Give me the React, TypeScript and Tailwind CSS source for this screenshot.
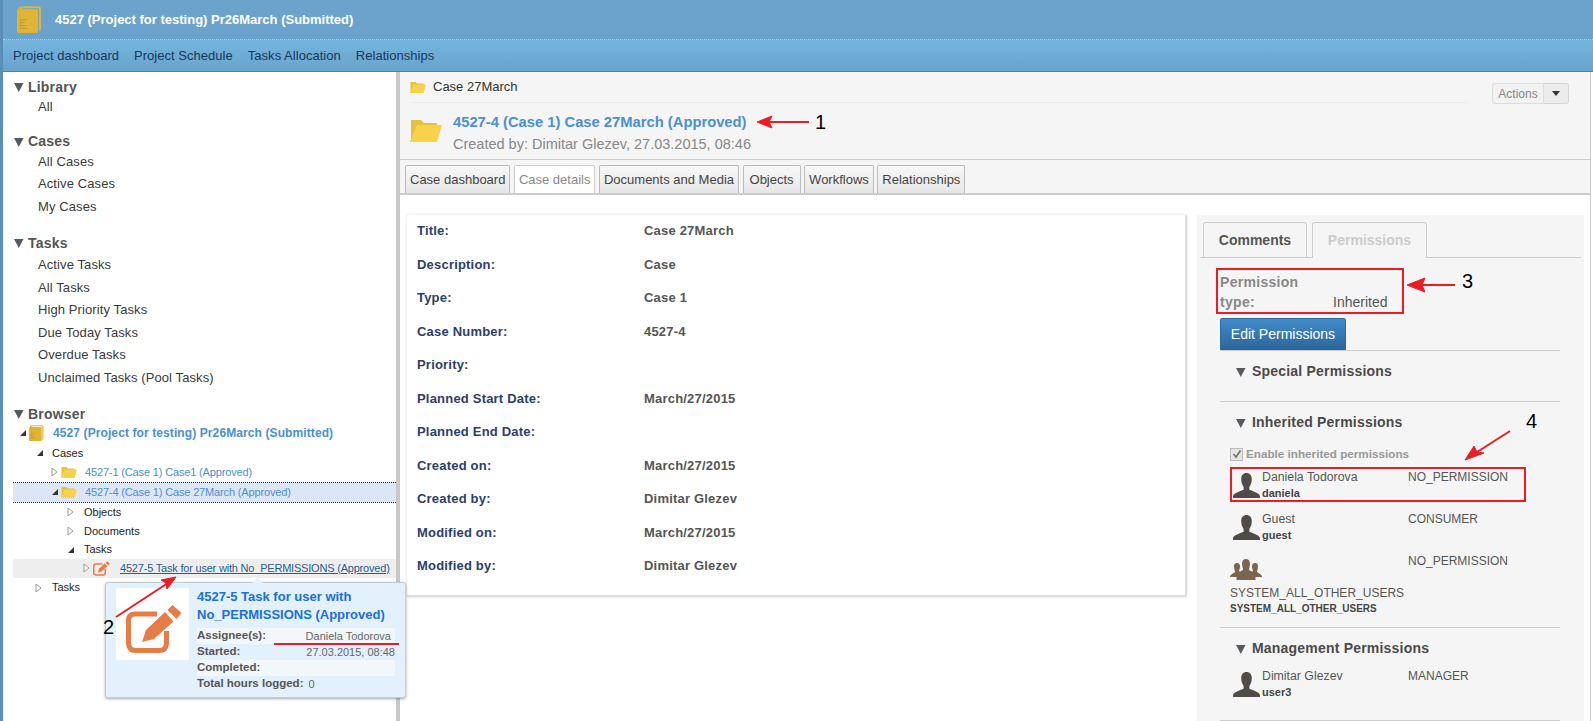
const sections = [
  { title: 'Library', mt: 'mt-[5px]', items: ['All'], itemsMt: 'mt-[-1px]' },
  { title: 'Cases', mt: 'mt-[13px]', items: ['All Cases', 'Active Cases', 'My Cases'], itemsMt: 'mt-[-1px]' },
  { title: 'Tasks', mt: 'mt-[15px]', items: ['Active Tasks', 'All Tasks', 'High Priority Tasks', 'Due Today Tasks', 'Overdue Tasks', 'Unclaimed Tasks (Pool Tasks)'], itemsMt: 'mt-[1px]' },
];

const details = [
  ['Title:', 'Case 27March'],
  ['Description:', 'Case'],
  ['Type:', 'Case 1'],
  ['Case Number:', '4527-4'],
  ['Priority:', ''],
  ['Planned Start Date:', 'March/27/2015'],
  ['Planned End Date:', ''],
  ['Created on:', 'March/27/2015'],
  ['Created by:', 'Dimitar Glezev'],
  ['Modified on:', 'March/27/2015'],
  ['Modified by:', 'Dimitar Glezev'],
];

const tabs = ['Case dashboard', 'Case details', 'Documents and Media', 'Objects', 'Workflows', 'Relationships'];

function Tri({ className = '' }: { className?: string }) {
  return (
    <svg width="10" height="10" viewBox="0 0 10 10" className={`shrink-0 ${className}`}>
      <path d="M0 1h9.500L4.800 10z" fill="#555b60" />
    </svg>
  );
}

function Open() {
  return (
    <svg width="8" height="8" viewBox="0 0 8 8" className="shrink-0">
      <path d="M7 1v6H1z" fill="#333" />
    </svg>
  );
}

function Closed() {
  return (
    <svg width="7" height="10" viewBox="0 0 7 10" className="shrink-0">
      <path d="M1 1l5 4-5 4z" fill="#fff" stroke="#999" />
    </svg>
  );
}

function Folder({ w = 16, h = 12 }: { w?: number; h?: number }) {
  return (
    <svg width={w} height={h} viewBox="0 0 32 24" className="shrink-0">
      <path d="M1 23V2h10l3 3h13v3H8z" fill="#e9bf3f" />
      <path d="M7 7h25l-5 17H0z" fill="#f8d24c" />
    </svg>
  );
}

function Book({ size = 26 }: { size?: number }) {
  return (
    <svg width={size} height={size * 1.1} viewBox="0 0 26 28" className="shrink-0">
      <path d="M6 0h16q3 0 3 3v20q0 2-2 3V3q0-1-1-1H6z" fill="#e0b534" />
      <rect x="0" y="3" width="22" height="25" rx="2" fill="#e0b534" />
      <path d="M1 3q1-3 5-3v3z" fill="#e0b534" />
      <path d="M3 14h8M3 17h5M3 20h7M3 23h8M4 14v10" stroke="#c09a3a" strokeWidth="1" />
    </svg>
  );
}

function EditIcon({ w = 17, h = 15 }: { w?: number; h?: number }) {
  return (
    <svg width={w} height={h} viewBox="0 0 56 48" className="shrink-0">
      <path d="M31 9H9Q2.500 9 2.500 15.500V38q0 7.500 7.500 7.500h23q7.500 0 7.500-7.500V26" fill="none" stroke="#e67d47" strokeWidth="5" />
      <path d="M20 25L39 7l8.500 9.500L28 34 16 37z" fill="#e67d47" />
      <path d="M41.500 5L46.500 0 55.500 8 50.500 14z" fill="#e67d47" />
    </svg>
  );
}

function Person() {
  return (
    <svg width="27" height="25" viewBox="0 0 28 26" className="shrink-0">
      <path d="M14 0c3.500 0 5.500 2.500 5.500 6.500 0 3-1 6-2.500 8v3c3 1.500 10 3 11 6.500v2H0v-2c1-3.500 8-5 11-6.500v-3c-1.500-2-2.500-5-2.500-8C8.500 2.500 10.500 0 14 0z" fill="#4f4c48" />
    </svg>
  );
}

function Group() {
  return (
    <svg width="32" height="21" viewBox="0 0 32 21" className="block">
      <g fill="#7a6650">
        <path d="M7 4c2 0 3 1.500 3 3.500S9 11 9 12l3 2-3 4H0v-1c1-2 4-3 5-4 0-1-1-3-1-5.500S5 4 7 4z" />
        <path d="M25 4c-2 0-3 1.500-3 3.500s1 3.500 1 4.500l-3 2 3 4h9v-1c-1-2-4-3-5-4 0-1 1-3 1-5.500S27 4 25 4z" />
        <path d="M16 0c2.500 0 4 2 4 4.500S19 9 19 11c2 1 6 3 6.500 6v4h-19v-4C7 14 11 12 13 11c0-2-1-4-1-6.500S13.500 0 16 0z" />
      </g>
    </svg>
  );
}

function PermRow({ name, login, role }: { name: string; login: string; role: string }) {
  return (
    <div className="flex h-[42px]">
      <div className="flex w-[32px] items-end pb-[12px] pl-[3px]"><Person /></div>
      <div className="w-[146px]">
        <div className="mt-[1px] text-[12.300px] leading-[16px] text-[#555]">{name}</div>
        <div className="mt-[2px] text-[11px] font-bold leading-[13px] text-[#444]">{login}</div>
      </div>
      <div className="mt-[1px] text-[12px] leading-[16px] text-[#555]">{role}</div>
    </div>
  );
}

function PermHeading({ title }: { title: string }) {
  return (
    <div className="flex items-center gap-[6px] pl-[16px] text-[14px] font-bold tracking-[0.2px] text-[#4a4a4a]">
      <Tri />
      {title}
    </div>
  );
}

function Sidebar() {
  return (
    <aside className="w-[393px] shrink-0 bg-white pl-[10px]">
      {sections.map(s => (
        <div key={s.title} className={s.mt}>
          <div className="flex h-[20px] items-center gap-[4px] pl-[1px] text-[14px] font-bold tracking-[0.2px] text-[#555]">
            <Tri />
            {s.title}
          </div>
          <div className={`${s.itemsMt} pl-[25px] text-[13px] tracking-[0.1px] text-[#3a3a3a]`}>
            {s.items.map(i => (
              <div key={i} className="h-[22.500px] leading-[22.500px]">{i}</div>
            ))}
          </div>
        </div>
      ))}
      <div className="mt-[15px]">
        <div className="flex h-[20px] items-center gap-[4px] pl-[1px] text-[14px] font-bold tracking-[0.2px] text-[#555]">
          <Tri />
          Browser
        </div>
        <div className="text-[11px] text-[#222]">
          <div className="flex h-[20px] items-center pb-[2px] pl-[6px]">
            <Open />
            <span className="ml-[2px]"><Book size={15} /></span>
            <span className="ml-[9px] whitespace-nowrap text-[12px] font-bold tracking-[0.1px] text-[#4a90d2]">4527 (Project for testing) Pr26March (Submitted)</span>
          </div>
          <div className="flex h-[18px] items-center pl-[23px]">
            <Open />
            <span className="ml-[8px]">Cases</span>
          </div>
          <div className="flex h-[19.500px] items-center pl-[38px] tracking-[-0.15px] text-[#4a90d2]">
            <Closed />
            <span className="ml-[3px]"><Folder /></span>
            <span className="ml-[8px]">4527-1 (Case 1) Case1 (Approved)</span>
          </div>
          <div className="flex h-[21px] items-center border-y border-dotted border-[#333] bg-[#dde6f4] pl-[38px] tracking-[-0.15px] text-[#4a90d2]">
            <Open />
            <span className="ml-[2px]"><Folder /></span>
            <span className="ml-[8px]">4527-4 (Case 1) Case 27March (Approved)</span>
          </div>
          {['Objects', 'Documents'].map(t => (
            <div key={t} className="flex h-[19px] items-center pl-[54px] first-of-type:mt-[2px]">
              <Closed />
              <span className="ml-[10px]">{t}</span>
            </div>
          ))}
          <div className="flex h-[18px] items-center pl-[54px]">
            <Open />
            <span className="ml-[9px]">Tasks</span>
          </div>
          <div className="flex h-[19px] items-center bg-[#eeeeee] pl-[70px]">
            <Closed />
            <span className="ml-[3px]"><EditIcon /></span>
            <span className="ml-[10px] whitespace-nowrap tracking-[-0.2px] text-[#1f5f93] underline">4527-5 Task for user with No_PERMISSIONS (Approved)</span>
          </div>
          <div className="flex h-[20px] items-center pl-[22px]">
            <Closed />
            <span className="ml-[10px]">Tasks</span>
          </div>
        </div>
      </div>
    </aside>
  );
}

function MainHeader() {
  return (
    <div className="bg-[#f5f5f5]">
      <div className="flex">
        <div className="w-[1067px] pl-[10px]">
          <div className="flex h-[31px] items-center gap-[7px] border-b border-[#ececec] text-[13px] text-[#333]">
            <Folder w={16} h={12} />
            Case 27March
          </div>
          <div className="flex h-[56px] pt-[9px]">
            <div className="mt-[6px]"><Folder w={32} h={24} /></div>
            <div className="ml-[11px]">
              <div className="text-[14.750px] font-bold leading-[20px] text-[#4a90d2]">4527-4 (Case 1) Case 27March (Approved)</div>
              <div className="mt-[2px] text-[14.500px] leading-[20px] text-[#888]">Created by: Dimitar Glezev, 27.03.2015, 08:46</div>
            </div>
          </div>
        </div>
        <div className="ml-auto mr-[21px] mt-[11px] flex h-[21px] text-[12px] text-[#888]">
          <div className="flex w-[52px] items-center justify-center rounded-l-[3px] border border-[#ddd] bg-[#f2f2f2]">Actions</div>
          <div className="flex w-[25px] items-center justify-center rounded-r-[3px] border border-l-0 border-[#d5d5d5] bg-[#ececec]">
            <svg width="8" height="5" viewBox="0 0 8 5"><path d="M0 0h8L4 5z" fill="#333" /></svg>
          </div>
        </div>
      </div>
      <div className="flex h-[34px] items-end gap-[3.500px] border-t border-[#ccc] pl-[5px]">
        {tabs.map(t => (
          <div
            key={t}
            className={
              t === 'Case details'
                ? 'flex h-[28px] items-center rounded-t-[2px] border border-b-0 border-[#ccc] bg-white px-[4px] text-[13px] text-[#888]'
                : t === 'Objects'
                  ? 'flex h-[28px] items-center rounded-t-[2px] border border-b-0 border-[#bbb] bg-gradient-to-b from-[#f8f8f8] to-[#e6e6e6] px-[6px] text-[13px] text-[#444]'
                  : 'flex h-[28px] items-center rounded-t-[2px] border border-b-0 border-[#bbb] bg-gradient-to-b from-[#f8f8f8] to-[#e6e6e6] px-[4px] text-[13px] text-[#444]'
            }
          >
            {t}
          </div>
        ))}
      </div>
    </div>
  );
}

function DetailsCard() {
  return (
    <div className="h-[382px] w-[780px] shrink-0 rounded-[2px] border-r-2 border-b-2 border-[#ddd] bg-white pl-[10px] shadow-[0_0_3px_rgba(0,0,0,0.15)]">
      {details.map(([k, v]) => (
        <div key={k} className="flex h-[33.500px] items-center pb-[2px] text-[13px] font-bold tracking-[0.2px]">
          <div className="w-[227px] text-[#2c3e6b]">{k}</div>
          <div className="text-[#555]">{v}</div>
        </div>
      ))}
    </div>
  );
}

function PermissionsPanel() {
  return (
    <div className="ml-[10px] w-[387px] shrink-0 bg-[#f5f5f5] pt-[7px]">
      <div className="mx-[3px] flex h-[36px] items-end gap-[5px] border-b border-[#ccc] pl-[3px]">
        <div className="flex h-[35px] w-[104px] items-center justify-center rounded-t-[3px] border border-b-0 border-[#ccc] text-[14px] font-bold text-[#555]">Comments</div>
        <div className="mb-[-1px] flex h-[36px] w-[115px] items-center justify-center rounded-t-[3px] border border-b-0 border-[#ccc] bg-[#f5f5f5] text-[14px] font-bold text-[#ccc]">Permissions</div>
      </div>
      <div className="ml-[23px] w-[340px]">
        <div className="mt-[14px] flex w-[187px]">
          <div className="w-[113px] text-[14px] font-bold leading-[20px] tracking-[0.3px] text-[#888]">Permission<br />type:</div>
          <div className="self-end text-[14px] leading-[20px] text-[#555]">Inherited</div>
        </div>
        <div className="mt-[6px] flex h-[33px] w-[126px] items-center justify-center rounded-[2px] border border-[#2d6ca2] bg-gradient-to-b from-[#428bca] to-[#2b669a] text-[14px] text-white">Edit Permissions</div>
        <div className="mt-[-1px] h-[11px] border-t border-[#ccc]" />
        <PermHeading title="Special Permissions" />
        <div className="mt-[9px] h-[11px] border-b border-[#ccc]" />
        <div className="mt-[10px]"><PermHeading title="Inherited Permissions" /></div>
        <div className="ml-[10px] mt-[13px] flex h-[16px] items-center gap-[3px] text-[11.700px] font-bold text-[#999]">
          <span className="flex h-[13px] w-[13px] shrink-0 items-center justify-center border border-[#bbb] bg-[#e6e6e6]">
            <svg width="10" height="10" viewBox="0 0 10 10"><path d="M1.500 5l2.500 3 4.500-6.500" fill="none" stroke="#777" strokeWidth="1.800" /></svg>
          </span>
          Enable inherited permissions
        </div>
        <div className="ml-[10px] mt-[6px]">
          <PermRow name="Daniela Todorova" login="daniela" role="NO_PERMISSION" />
          <PermRow name="Guest" login="guest" role="CONSUMER" />
          <div className="mt-[1px] flex h-[68px]">
            <div className="w-[178px]">
              <div className="mt-[6px]"><Group /></div>
              <div className="mt-[5px] text-[12px] leading-[16px] text-[#555]">SYSTEM_ALL_OTHER_USERS</div>
              <div className="mt-[2px] text-[10px] font-bold leading-[12px] text-[#444]">SYSTEM_ALL_OTHER_USERS</div>
            </div>
            <div className="text-[12px] leading-[16px] text-[#555]">NO_PERMISSION</div>
          </div>
        </div>
        <div className="mt-[6px] h-[11px] border-t border-[#ccc]" />
        <PermHeading title="Management Permissions" />
        <div className="ml-[10px] mt-[8px]"><PermRow name="Dimitar Glezev" login="user3" role="MANAGER" /></div>
        <div className="mt-[11px] border-t border-[#ccc]" />
      </div>
    </div>
  );
}

function TaskTooltip() {
  const rows = [
    ['Assignee(s):', 'Daniela Todorova', 'bg-[#f2f7fc]', 'text-right pr-[4px]'],
    ['Started:', '27.03.2015, 08:48', '', 'text-right'],
    ['Completed:', '', 'bg-[#f2f7fc]', ''],
    ['Total hours logged:', '0', '', 'ml-[5px]'],
  ];
  return (
    <div className="absolute left-[105px] top-[582px] flex h-[116px] w-[301px] rounded-[3px] border border-[#c4ccd4] bg-[#e3f1fd] pl-[10px] pt-[5px] shadow-[0_1px_3px_rgba(0,0,0,0.35)]">
      <div className="absolute left-[148px] top-[-4px] h-[7px] w-[7px] rotate-45 bg-[#e3f1fd]" />
      <div className="flex h-[72px] w-[73px] shrink-0 items-center justify-center rounded-[2px] bg-white pl-[2px] pt-[10px]">
        <EditIcon w={56} h={48} />
      </div>
      <div className="ml-[8px] w-[198px]">
        <div className="whitespace-nowrap text-[13px] font-bold leading-[18px] text-[#1a6fe0]">
          4527-5 Task for user with<br />
          No_PERMISSIONS (Approved)
        </div>
        <div className="mt-[4px]">
          {rows.map(([k, v, bg, cls]) => (
            <div key={k} className={`flex h-[16px] items-center text-[11px] ${bg}`}>
              <span className="shrink-0 text-[11.500px] font-bold text-[#555]">{k}</span>
              <span className={`flex-1 text-[#666] ${cls}`}>{v}</span>
            </div>
          ))}
        </div>
      </div>
    </div>
  );
}

function Annotations() {
  return (
    <>
      <svg width="1593" height="721" className="pointer-events-none absolute left-0 top-0">
        <g fill="#ed1c24" stroke="#ed1c24">
          <path d="M766 122h43" strokeWidth="2" />
          <path d="M757 122l15-6-3 6 3 6z" />
          <path d="M1455 285h-42" strokeWidth="2" />
          <path d="M1407 285l18-7-3 7 3 7z" />
          <path d="M1510 431l-36 23" strokeWidth="2" />
          <path d="M1465 460l9-14 3 6 7 1z" />
          <path d="M116 617l58-38" strokeWidth="2" />
          <path d="M176 577l-15 3 5 3 1 6z" />
          <path d="M274 644h125" strokeWidth="2" />
        </g>
        <g fill="none" stroke="#ed1c24" strokeWidth="2">
          <rect x="1217" y="269" width="186" height="44" />
          <rect x="1231" y="468" width="294" height="33" />
        </g>
      </svg>
      <span className="absolute left-[815px] top-[110px] text-[20px] leading-[24px] text-black">1</span>
      <span className="absolute left-[103px] top-[615px] text-[20px] leading-[24px] text-black">2</span>
      <span className="absolute left-[1462px] top-[269px] text-[20px] leading-[24px] text-black">3</span>
      <span className="absolute left-[1526px] top-[409px] text-[20px] leading-[24px] text-black">4</span>
    </>
  );
}

export default function App() {
  return (
    <div className="relative h-[721px] w-[1593px] overflow-hidden bg-white font-['Liberation_Sans',Arial,sans-serif]">
      <header className="border-l-[3px] border-[#5a8fb8]">
        <div className="flex h-[40px] items-center border-b border-dotted border-[#b5d3e6] bg-[#6ca3cc] pl-[14px]">
          <Book size={25} />
          <span className="ml-[13px] text-[13px] font-bold text-white">4527 (Project for testing) Pr26March (Submitted)</span>
        </div>
        <nav className="flex h-[32px] items-center gap-[15px] border-b border-[#4a83a8] bg-gradient-to-b from-[#74b5dd] to-[#6aa3cc] pl-[10px] text-[13px] tracking-[0.03px] text-[#17375e]">
          <span>Project dashboard</span>
          <span>Project Schedule</span>
          <span>Tasks Allocation</span>
          <span>Relationships</span>
        </nav>
      </header>
      <div className="flex h-[649px] border-l-[3px] border-[#5a8fb8]">
        <Sidebar />
        <div className="w-[4px] shrink-0 bg-[#c8c8c8]" />
        <main className="mr-[2px] min-w-0 flex-1 border-r border-[#ccc]">
          <MainHeader />
          <div className="h-[2px] bg-[#ccc]" />
          <div className="flex pl-[7px] pt-[20px]">
            <DetailsCard />
            <PermissionsPanel />
          </div>
        </main>
      </div>
      <TaskTooltip />
      <Annotations />
    </div>
  );
}
